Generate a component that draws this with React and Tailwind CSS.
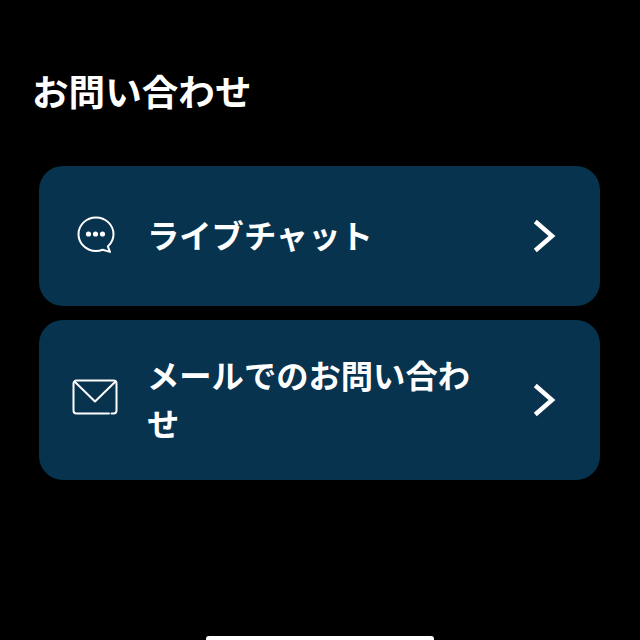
const font = { fontFamily: '"Noto Sans CJK JP", "Noto Sans", sans-serif' };

function ChatIcon() {
  return (
    <svg width="40" height="40" viewBox="0 0 40 40" fill="none" stroke="white" strokeWidth="2" strokeLinejoin="round">
      <path d="M20 2.500C10.300 2.500 2.500 10 2.500 19.200S10.300 36 20 36c2.600 0 4.600-.5 6.600-1.300l7.400 2.200-2.200-5.500c3.600-3.200 5.700-7.300 5.700-12.200C37.500 10 29.700 2.500 20 2.500Z" />
      <circle cx="12.500" cy="19" r="2.600" fill="white" stroke="none" />
      <circle cx="19.500" cy="19" r="2.600" fill="white" stroke="none" />
      <circle cx="26.500" cy="19" r="2.600" fill="white" stroke="none" />
    </svg>
  );
}

function MailIcon() {
  return (
    <svg width="46" height="36" viewBox="0 0 46 36" fill="none" stroke="white" strokeWidth="2" strokeLinecap="round" strokeLinejoin="round">
      <path d="M37 34.500H4.500a3 3 0 0 1-3-3V4.500a3 3 0 0 1 3-3h37a3 3 0 0 1 3 3v27a3 3 0 0 1-3 3h-2" />
      <path d="M3 3l20 19.500L43 3" />
    </svg>
  );
}

function Chevron() {
  return (
    <svg width="24" height="36" viewBox="0 0 24 36" fill="none" stroke="white" strokeWidth="4.500" strokeLinecap="square" strokeLinejoin="miter">
      <path d="M4 5l15 13L4 31" />
    </svg>
  );
}

function Row({ icon, label, className }) {
  return (
    <button className={`w-full flex items-center bg-[#07334f] rounded-[24px] text-left ${className}`}>
      <span className="w-[108px] pl-[33px] flex items-center shrink-0">{icon}</span>
      <span className="w-[331px] shrink-0 text-white text-[32.300px] leading-[48px] font-bold mb-[5px]">{label}</span>
      <span className="ml-[55px]"><Chevron /></span>
    </button>
  );
}

export default function App() {
  return (
    <div style={font} className="w-[640px] h-[640px] bg-black flex flex-col overflow-hidden">
      <h1 className="pl-[32px] pt-[64px] text-white text-[36.600px] leading-[54px] font-bold">お問い合わせ</h1>
      <div className="mt-[48px] ml-[39px] w-[561px] flex flex-col gap-[14px]">
        <Row icon={<span className="ml-[4px] mb-[2px]"><ChatIcon /></span>} label="ライブチャット" className="h-[140px]" />
        <Row icon={<span className="mb-[6px]"><MailIcon /></span>} label="メールでのお問い合わせ" className="h-[160px]" />
      </div>
      <div className="mt-auto mx-auto w-[228px] h-[4px] bg-white rounded-t-[3px]" />
    </div>
  );
}
